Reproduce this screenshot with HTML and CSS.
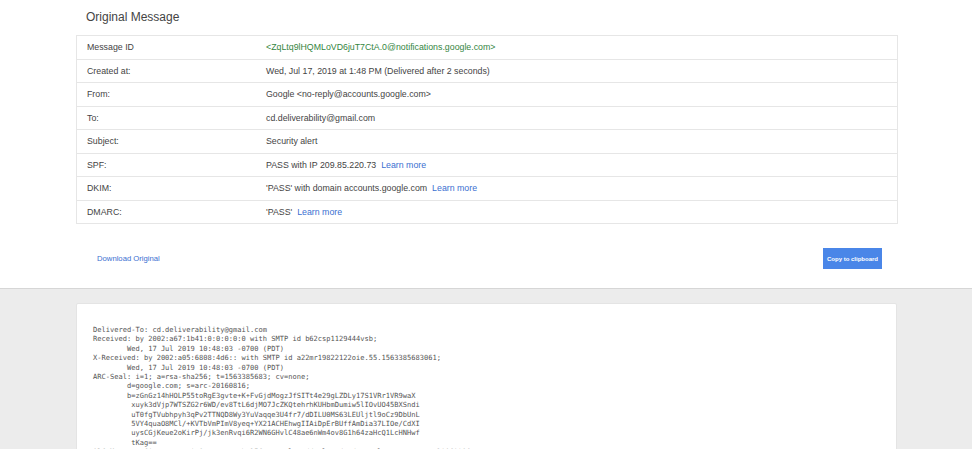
FILE: index.html
```html
<!DOCTYPE html>
<html lang="en">
<head>
<meta charset="utf-8">
<title>Original Message</title>
<link rel="stylesheet" href="styles.css">
</head>
<body>
<section class="top">
  <h1 class="title">Original Message</h1>
  <div class="table">
    <div class="row"><div class="label">Message ID</div><div class="value green">&lt;ZqLtq9lHQMLoVD6juT7CtA.0@notifications.google.com&gt;</div></div>
    <div class="row"><div class="label">Created at:</div><div class="value">Wed, Jul 17, 2019 at 1:48 PM (Delivered after 2 seconds)</div></div>
    <div class="row"><div class="label">From:</div><div class="value">Google &lt;no-reply@accounts.google.com&gt;</div></div>
    <div class="row"><div class="label">To:</div><div class="value">cd.deliverability@gmail.com</div></div>
    <div class="row"><div class="label">Subject:</div><div class="value">Security alert</div></div>
    <div class="row"><div class="label">SPF:</div><div class="value">PASS with IP 209.85.220.73 <a class="learn" href="#">Learn more</a></div></div>
    <div class="row"><div class="label">DKIM:</div><div class="value">'PASS' with domain accounts.google.com <a class="learn" href="#">Learn more</a></div></div>
    <div class="row"><div class="label">DMARC:</div><div class="value">'PASS' <a class="learn" href="#">Learn more</a></div></div>
  </div>
  <div class="actions">
    <a class="download" href="#">Download Original</a>
    <button class="copy" type="button">Copy to clipboard</button>
  </div>
</section>
<section class="bottom">
  <pre class="raw">Delivered-To: cd.deliverability@gmail.com
Received: by 2002:a67:1b41:0:0:0:0:0 with SMTP id b62csp1129444vsb;
        Wed, 17 Jul 2019 10:48:03 -0700 (PDT)
X-Received: by 2002:a05:6808:4d6:: with SMTP id a22mr19822122oie.55.1563385683061;
        Wed, 17 Jul 2019 10:48:03 -0700 (PDT)
ARC-Seal: i=1; a=rsa-sha256; t=1563385683; cv=none;
        d=google.com; s=arc-20160816;
        b=zGnGz14hHOLP55toRgE3gvte+K+FvGjdMogzJfSITt4e29gLZDLy17S1VRr1VR9waX
         xuyk3dVjp7WTSZG2r6WD/ev8TtL6djMO7JcZKQtehrhKUHbmDumiw5lIOvUO45BXSndi
         uT0fgTVubhpyh3qPv2TTNQD8Wy3YuVaqqe3U4fr7/dDILU0MS63LEUljtl9oCz9DbUnL
         5VY4quaO8MCl/+KVTbVmPImV8yeq+YX21ACHEhwgIIAiDpErBUffAmDia37LIOe/CdXI
         uysCGjKeue2oKirPj/jk3enRvqi6R2WN6GHvlC48ae6nWm4ov8G1h64zaHcQ1LcHNHwf
         tKag==
ARC-Message-Signature: i=1; a=rsa-sha256; c=relaxed/relaxed; d=google.com; s=arc-20160816;</pre>
</section>
</body>
</html>
```

FILE: styles.css
```css
html, body {
  margin: 0;
  height: 449px;
  overflow: hidden;
}
body {
  background: #ececec;
  font-family: "Liberation Sans", Arial, sans-serif;
  color: #444;
}
.top {
  box-sizing: border-box;
  background: #fff;
  padding: 10px 74px 0 76px;
  height: 289px;
  border-bottom: 1px solid #d6d6d6;
}
.title {
  margin: 0 0 0 10px;
  font-size: 12px;
  line-height: 15px;
  font-weight: 400;
  color: #444;
}
.table {
  margin-top: 10px;
  border: 1px solid #e6e6e6;
}
.row {
  display: flex;
  align-items: center;
  height: 22.5px;
  border-bottom: 1px solid #e6e6e6;
  padding-left: 10px;
  font-size: 8.8px;
}
.row:last-child { border-bottom: 0; }
.label { width: 179px; flex: none; }
.value { flex: 1; }
.green { color: #34853f; }
.learn { color: #3b6fd1; text-decoration: none; margin-left: 2.5px; }
.actions {
  display: flex;
  justify-content: space-between;
  align-items: center;
  margin-top: 24px;
  padding: 0 16px 0 21px;
}
.download { color: #3b6fd1; font-size: 7.7px; text-decoration: none; }
.copy {
  width: 59px;
  height: 21px;
  padding: 0;
  border: 0;
  background: #4a86e8;
  color: #fff;
  font: 700 6px "Liberation Sans", Arial, sans-serif;
}
.bottom {
  box-sizing: border-box;
  margin: 14px 75px 0 76px;
  background: #fff;
  border: 1px solid #e4e4e4;
  border-radius: 2px;
  padding: 21px 16px 0;
  height: 200px;
  overflow: hidden;
}
.raw {
  margin: 0;
  font-family: "DejaVu Sans Mono", monospace;
  font-size: 7.05px;
  line-height: 9.4px;
  color: #555;
}
```
